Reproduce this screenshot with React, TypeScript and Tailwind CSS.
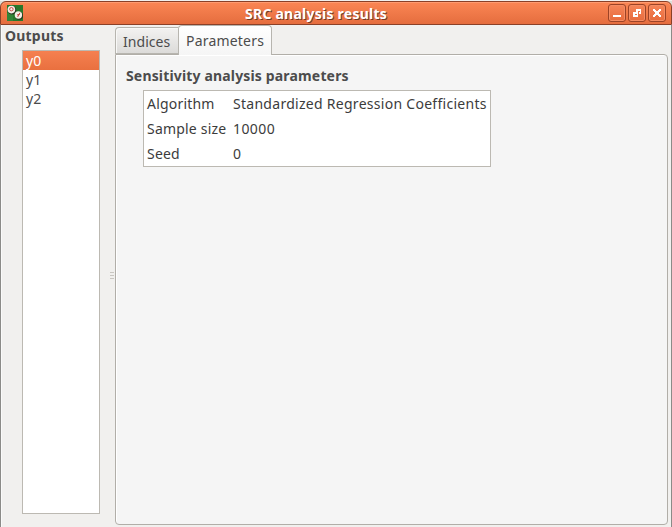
import type { ReactNode } from "react";

function AppIcon() {
  return (
    <svg width="16" height="16" viewBox="0 0 16 16" className="ml-[6px] mt-px shrink-0">
      <rect width="16" height="16" fill="#28772a" />
      <path d="M0 8h6v8H0z" fill="#328538" />
      <circle cx="5" cy="5.2" r="4.2" fill="#27351f" />
      <circle cx="4.4" cy="4.6" r="3.8" fill="#f4eee6" />
      <circle cx="4.4" cy="4.2" r="1.7" fill="none" stroke="#c84b46" strokeWidth="1" />
      <circle cx="12" cy="10.7" r="4" fill="#27351f" />
      <circle cx="11.4" cy="10" r="3.7" fill="#f4eee6" />
      <path d="M13 7.7 10.6 12M10 10l3-1" stroke="#c84b46" strokeWidth="1" fill="none" />
    </svg>
  );
}

function WindowButton({ children }: { children: ReactNode }) {
  return (
    <div className="flex h-[18px] w-[18px] items-center justify-center rounded-[3px] border border-[#9c4326] bg-gradient-to-b from-[#f58559] to-[#e76b3c] shadow-[inset_0_0_0_1px_#f58c63]">
      <svg width="16" height="16" viewBox="0 0 16 16" shapeRendering="crispEdges">
        {children}
      </svg>
    </div>
  );
}

function TitleBar() {
  return (
    <div className="bg-[#dcded8]">
      <header className="mt-px flex h-6 items-start rounded-t-[6px] border border-[#8b4027] bg-gradient-to-b from-[#fb8654] to-[#e56d3e] pt-[2px] shadow-[inset_0_1px_0_#ff9b70]">
        <AppIcon />
        <h1 className="flex-1 pl-[222px] font-bold text-[14px] leading-[19px] tracking-[0.24px] text-white [text-shadow:1px_1px_0_#743b27]">
          SRC analysis results
        </h1>
        <div className="mr-[5px] flex gap-[2px]">
          <WindowButton>
            <path d="M4 10h8v2H4z" fill="#fff" />
          </WindowButton>
          <WindowButton>
            <path d="M7 4h5v5h-2V7H7zM4 7h5v5H4z" fill="#fff" />
            <path d="M9 6h2v1H9zM6 9h2v1H6z" fill="#ed7446" />
          </WindowButton>
          <WindowButton>
            <path d="M4 4h2v1h1v1h2V5h1V4h2v2h-1v1h-1v2h1v1h1v2h-2v-1H9v-1H7v1H6v1H4v-2h1V9h1V7H5V6H4z" fill="#fff" />
          </WindowButton>
        </div>
      </header>
    </div>
  );
}

const outputs = ["y0", "y1", "y2"];

function OutputsPanel() {
  return (
    <aside className="w-[108px] shrink-0 pl-[3px] pt-px">
      <h2 className="h-[24px] font-bold text-[14px] leading-[19px] tracking-[0.2px]">Outputs</h2>
      <ul className="ml-[17px] h-[464px] w-[78px] border border-[#bcb9b2] bg-white">
        {outputs.map((name, i) => (
          <li
            key={name}
            className={
              i === 0
                ? "h-[19px] bg-gradient-to-b from-[#f58050] to-[#e9703f] pl-[3px] leading-[20px] text-white"
                : "h-[19px] pl-[3px] leading-[20px]"
            }
          >
            {name}
          </li>
        ))}
      </ul>
    </aside>
  );
}

function Splitter() {
  return (
    <div className="flex w-[5px] shrink-0 flex-col gap-[2px] pt-[247px]">
      <i className="h-px w-1 bg-[#c9c6c1]" />
      <i className="h-px w-1 bg-[#c9c6c1]" />
      <i className="h-px w-1 bg-[#c9c6c1]" />
    </div>
  );
}

function TabPanel() {
  return (
    <main className="flex h-[500px] w-[553px] flex-col">
      <nav className="z-10 flex h-[30px] shrink-0 items-end">
        <div className="mb-px h-[27px] w-[63px] rounded-tl-[4px] border border-r-0 border-[#b7b5af] bg-gradient-to-b from-[#f3f2f1] to-[#dcdbd9] pl-[7px] leading-[27px] tracking-[0.05px] shadow-[inset_1px_1px_0_#f8f8f7]">
          Indices
        </div>
        <div className="h-[30px] w-[94px] rounded-t-[4px] border border-b-0 border-[#b7b5af] bg-gradient-to-b from-white to-[#f5f5f5] pl-[7px] leading-[30px] tracking-[0.2px]">
          Parameters
        </div>
      </nav>
      <section className="-mt-px flex-1 rounded-b-[4px] rounded-tr-[4px] border border-[#b1aea8] bg-[#f5f5f5] pl-[10px] pt-[11px] shadow-[inset_1px_1px_0_#fff]">
        <h2 className="h-[24px] font-bold text-[14px] leading-[20px] tracking-[0.16px]">Sensitivity analysis parameters</h2>
        <dl className="ml-[17px] grid h-[77px] w-[348px] grid-cols-[86px_1fr] grid-rows-3 border border-[#bcb9b2] bg-white pl-[3px] leading-[26px] tracking-[0.2px] text-[#3c3c3c]">
          <dt>Algorithm</dt>
          <dd className="whitespace-nowrap tracking-[0.28px]">Standardized Regression Coefficients</dd>
          <dt className="whitespace-nowrap">Sample size</dt>
          <dd className="tracking-[0.4px]">10000</dd>
          <dt>Seed</dt>
          <dd>0</dd>
        </dl>
      </section>
    </main>
  );
}

export default function App() {
  return (
    <div className="h-[527px] w-[672px] overflow-hidden bg-[#f1f0ee] font-['Noto_Sans',sans-serif] text-[14px] text-[#4c4c4c]">
      <TitleBar />
      <div className="flex h-[502px] border-x border-[#8b8b88] pl-px shadow-[inset_1px_0_0_#fafafa]">
        <OutputsPanel />
        <Splitter />
        <TabPanel />
      </div>
    </div>
  );
}
